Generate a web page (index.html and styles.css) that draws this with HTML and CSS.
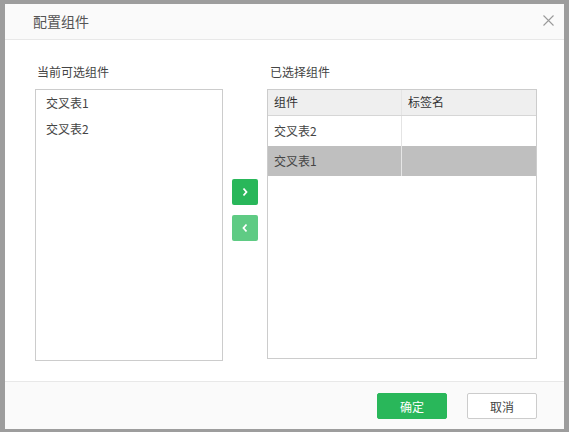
FILE: index.html
```html
<!DOCTYPE html>
<html lang="zh">
<head>
<meta charset="utf-8">
<title>配置组件</title>
<link rel="stylesheet" href="styles.css">
</head>
<body>
<div class="backdrop">
  <div class="dialog">
    <div class="dlg-head">
      <span class="dlg-title">配置组件</span>
      <span class="dlg-close">
        <svg width="11" height="11" viewBox="0 0 11 11"><path d="M0.5 0.5 L10.5 10.5 M10.5 0.5 L0.5 10.5" stroke="#9a9a9a" stroke-width="1.1" fill="none"/></svg>
      </span>
    </div>
    <div class="dlg-body">
      <div class="col-left">
        <div class="label">当前可选组件</div>
        <div class="list">
          <div class="list-item">交叉表1</div>
          <div class="list-item">交叉表2</div>
        </div>
      </div>
      <div class="col-mid">
        <button class="move move-right">
          <svg width="8" height="10" viewBox="0 0 8 10"><path d="M2.5 1.5 L5.5 5 L2.5 8.5" stroke="#fff" stroke-width="1.8" fill="none"/></svg>
        </button>
        <button class="move move-left">
          <svg width="8" height="10" viewBox="0 0 8 10"><path d="M5.5 1.5 L2.5 5 L5.5 8.5" stroke="#fff" stroke-width="1.8" fill="none"/></svg>
        </button>
      </div>
      <div class="col-right">
        <div class="label">已选择组件</div>
        <div class="table">
          <div class="row head">
            <div class="cell c1">组件</div>
            <div class="cell c2">标签名</div>
          </div>
          <div class="row">
            <div class="cell c1">交叉表2</div>
            <div class="cell c2"></div>
          </div>
          <div class="row selected">
            <div class="cell c1">交叉表1</div>
            <div class="cell c2"></div>
          </div>
        </div>
      </div>
    </div>
    <div class="dlg-foot">
      <button class="btn btn-ok">确定</button>
      <button class="btn btn-cancel">取消</button>
    </div>
  </div>
</div>
</body>
</html>
```

FILE: styles.css
```css
* { box-sizing: border-box; }
html, body {
  margin: 0;
  padding: 0;
  width: 569px;
  height: 432px;
  overflow: hidden;
  background: #9d9d9d;
  font-family: "Noto Sans CJK SC", "Noto Sans", "Liberation Sans", sans-serif;
  font-size: 12px;
  color: #444;
}
.backdrop {
  padding: 4px 5px 0 5px;
}
.dialog {
  width: 559px;
  height: 425px;
  background: #fff;
  display: flex;
  flex-direction: column;
}
.dlg-head {
  height: 36px;
  background: #fafafa;
  border-bottom: 1px solid #e8e8e8;
  display: flex;
  align-items: center;
  justify-content: space-between;
  padding: 0 10px 0 28px;
}
.dlg-title {
  font-size: 14px;
  color: #555;
  line-height: 20px;
  margin-top: -2px;
}
.dlg-close {
  display: flex;
  margin-top: -3px;
}
.dlg-body {
  height: 341px;
  display: flex;
  padding: 24px 0 0 30px;
}
.label {
  height: 25px;
  line-height: 16px;
  padding-left: 2px;
  color: #444;
}
.col-left {
  width: 188px;
}
.list {
  height: 272px;
  border: 1px solid #cccccc;
}
.list-item {
  height: 26px;
  line-height: 26px;
  padding-left: 10px;
  color: #444;
}
.col-mid {
  width: 26px;
  margin: 0 9px;
  padding-top: 115px;
  display: flex;
  flex-direction: column;
  gap: 10px;
}
.move {
  width: 26px;
  height: 26px;
  border: none;
  border-radius: 2px;
  padding: 0;
  display: flex;
  align-items: center;
  justify-content: center;
  cursor: pointer;
}
.move-right { background: #29b75a; }
.move-left { background: #5fcb84; }
.col-right {
  width: 270px;
}
.col-right .label { padding-left: 3px; }
.table {
  height: 270px;
  border: 1px solid #cccccc;
}
.row {
  display: flex;
  height: 30px;
}
.row.head {
  height: 26px;
  background: #efefef;
  border-bottom: 1px solid #d6d6d6;
}
.cell {
  line-height: 30px;
  padding-left: 6px;
  color: #444;
}
.row.head .cell {
  line-height: 24px;
  color: #333;
}
.c1 {
  width: 134px;
  border-right: 1px solid #e4e4e4;
}
.c2 { flex: 1; }
.row.selected { background: #bfbfbf; }
.row.selected .c1 { border-right-color: #e6e6e6; }
.dlg-foot {
  height: 48px;
  background: #fafafa;
  border-top: 1px solid #e8e8e8;
  display: flex;
  justify-content: flex-end;
  gap: 20px;
  padding: 11px 27px 0 0;
}
.btn {
  width: 70px;
  height: 26px;
  border-radius: 2px;
  font-family: "Noto Sans CJK SC", "Noto Sans", sans-serif;
  font-size: 12px;
  padding: 0;
  cursor: pointer;
}
.btn-ok {
  background: #29b75a;
  border: 1px solid #29b75a;
  color: #fff;
}
.btn-cancel {
  background: #fff;
  border: 1px solid #cccccc;
  color: #444;
}
```
